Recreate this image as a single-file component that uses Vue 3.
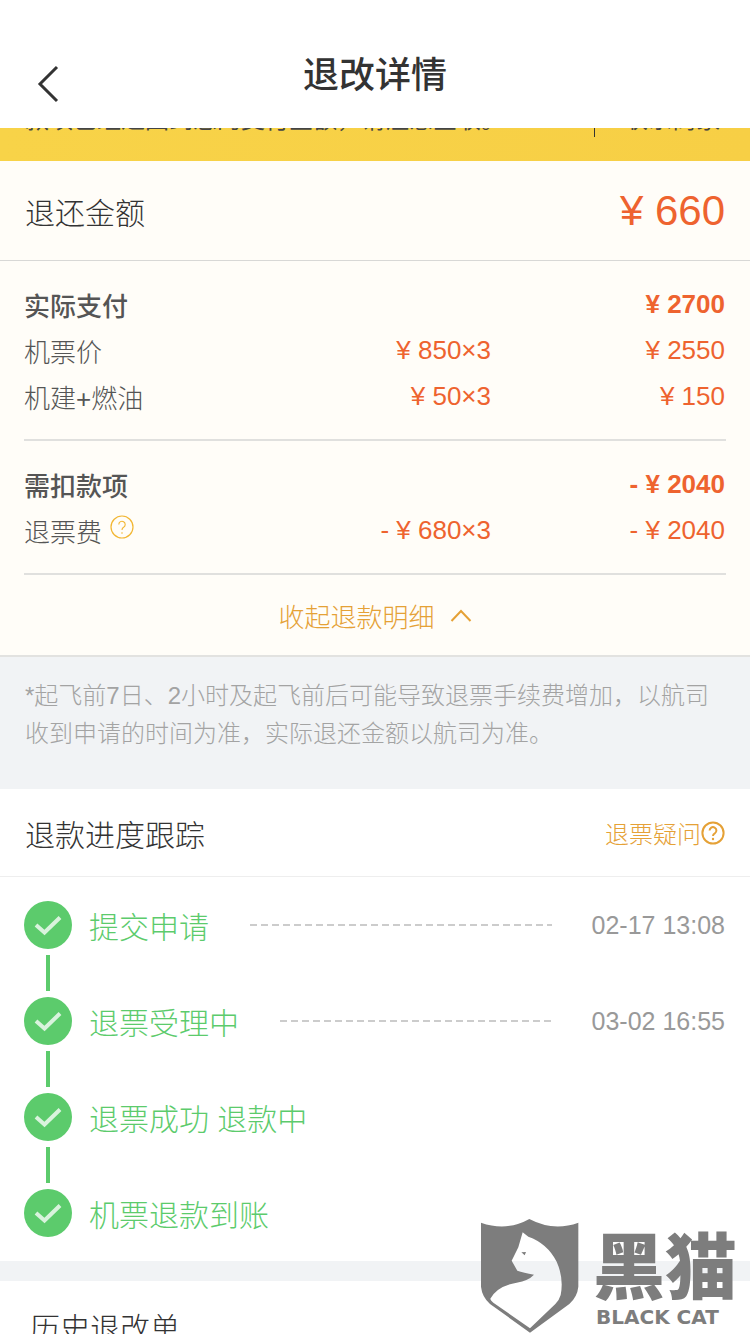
<script setup>
const paid = [
  { label: '机票价', unit: '¥ 850×3', total: '¥ 2550' },
  { label: '机建+燃油', unit: '¥ 50×3', total: '¥ 150' },
];

const steps = [
  { label: '提交申请', time: '02-17 13:08' },
  { label: '退票受理中', time: '03-02 16:55' },
  { label: '退票成功 退款中', time: '' },
  { label: '机票退款到账', time: '' },
];
</script>

<template>
  <div class="page">
    <header class="nav">
      <svg class="nav-back" width="24" height="38" viewBox="0 0 24 38" aria-hidden="true">
        <path d="M20 2 L3 19 L20 36" fill="none" stroke="#333" stroke-width="3" />
      </svg>
      <h1 class="nav-title">退改详情</h1>
    </header>

    <div class="notice">
      <span class="notice-text">款项已经退回到您的支付金额，请注意查收。</span>
      <span class="notice-link">联系商家</span>
    </div>

    <section class="refund">
      <span>退还金额</span>
      <span class="refund-amount">¥ 660</span>
    </section>

    <section class="detail">
      <div class="group">
        <div class="row row-head">
          <span>实际支付</span>
          <span class="row-total">¥ 2700</span>
        </div>
        <div v-for="item in paid" :key="item.label" class="row">
          <span>{{ item.label }}</span>
          <span class="row-unit">{{ item.unit }}</span>
          <span class="row-total">{{ item.total }}</span>
        </div>
      </div>
      <div class="group">
        <div class="row row-head">
          <span>需扣款项</span>
          <span class="row-total">- ¥ 2040</span>
        </div>
        <div class="row">
          <span class="fee-label">
            退票费
            <svg class="fee-help" width="24" height="24" viewBox="0 0 24 24" aria-hidden="true">
              <circle cx="12" cy="12" r="11" fill="none" stroke="#f2b632" stroke-width="1.2" />
              <path d="M8.8 9.4 A3.2 3.2 0 1 1 13.6 12.2 Q12 13 12 15" fill="none" stroke="#f2b632" stroke-width="1.1" />
              <circle cx="12" cy="18" r="0.8" fill="#f2b632" />
            </svg>
          </span>
          <span class="row-unit">- ¥ 680×3</span>
          <span class="row-total">- ¥ 2040</span>
        </div>
      </div>
      <div class="toggle">
        <span>收起退款明细</span>
        <svg width="22" height="14" viewBox="0 0 22 14" aria-hidden="true">
          <path d="M1.5 13 L11 3 L20.5 13" fill="none" stroke="#e5a136" stroke-width="2" />
        </svg>
      </div>
    </section>

    <p class="note">*起飞前7日、2小时及起飞前后可能导致退票手续费增加，以航司收到申请的时间为准，实际退还金额以航司为准。</p>

    <section class="track">
      <div class="track-head">
        <h2 class="track-title">退款进度跟踪</h2>
        <span class="track-help">
          退票疑问
          <svg width="24" height="24" viewBox="0 0 24 24" aria-hidden="true">
            <circle cx="12" cy="12" r="10.6" fill="none" stroke="#e5a136" stroke-width="2" />
            <path d="M8.6 9.6 A3.4 3.4 0 1 1 13.8 12.4 Q12 13.4 12 15" fill="none" stroke="#e5a136" stroke-width="2" />
            <circle cx="12" cy="18" r="1.2" fill="#e5a136" />
          </svg>
        </span>
      </div>
      <ol class="steps">
        <li v-for="step in steps" :key="step.label" class="step">
          <span class="step-dot">
            <svg width="48" height="48" viewBox="0 0 48 48" aria-hidden="true">
              <circle cx="24" cy="24" r="24" fill="#5ccb6c" />
              <path d="M12 24 L20.5 31.5 L36 16.5" fill="none" stroke="#d9f3dd" stroke-width="4" />
            </svg>
          </span>
          <span class="step-label">{{ step.label }}</span>
          <template v-if="step.time">
            <span class="step-dash"></span>
            <span class="step-time">{{ step.time }}</span>
          </template>
        </li>
      </ol>
    </section>

    <section class="history">历史退改单</section>

    <!-- watermark sits over the page content -->
    <div class="mark" aria-hidden="true">
      <svg class="mark-shield" width="290" height="134" viewBox="0 0 870 402">
        <path
          fill="#7d7d7d"
          fill-rule="evenodd"
          d="M63 68 Q140 95 208 57 Q280 95 355 68 L355 260 Q352 290 328 312 L210 398 L90 312 Q66 290 63 260 Z
             M188 97 L205 110 Q262 130 290 185 Q312 235 302 285 Q298 300 286 312 L210 385 L100 308 Q88 298 92 295 Q112 258 170 248 Q205 242 222 224 Q190 218 172 212 L155 182 L175 142 Z
             M184 157 L198 156 L194 166 Z"
        />
      </svg>
      <span class="mark-cn">黑猫</span>
      <span class="mark-en">BLACK CAT</span>
    </div>
  </div>
</template>

<style scoped>
.page {
  position: relative;
  width: 750px;
  height: 1334px;
  overflow: hidden;
  background: #fff;
  color: #333;
  font-family: "Liberation Sans", "Noto Sans CJK SC", sans-serif;
}

.nav {
  position: relative;
  display: flex;
  justify-content: center;
  align-items: center;
  height: 128px;
  padding-top: 40px;
  box-sizing: border-box;
}
.nav-back {
  position: absolute;
  left: 37px;
  top: 65px;
}
.nav-title {
  margin: 0;
  font-size: 36px;
  font-weight: 500;
  line-height: 50px;
  color: #333;
  position: relative;
  top: -8px;
}

.notice {
  display: flex;
  align-items: flex-end;
  height: 33px;
  padding: 0 30px 24px 25px;
  box-sizing: border-box;
  overflow: hidden;
  background: linear-gradient(90deg, #f8d348, #f7cf45);
  font-size: 24px;
  line-height: 34px;
  color: #444;
}
.notice-text {
  flex: 1;
  white-space: nowrap;
}
.notice-link {
  padding-left: 29px;
  border-left: 1px solid #333;
  white-space: nowrap;
}

.refund {
  display: flex;
  justify-content: space-between;
  align-items: center;
  height: 100px;
  padding: 0 25px;
  box-sizing: border-box;
  background: #fffdf8;
  border-bottom: 1px solid #d8d8d6;
  font-size: 30px;
  font-weight: 300;
}
.refund-amount {
  font-size: 42px;
  color: #ee632f;
}

.detail {
  padding: 0 24px;
  background: #fffdf8;
  border-bottom: 2px solid #e2e2e0;
}
.group {
  padding: 20px 0 20px;
  border-bottom: 2px solid #e0e0de;
}
.row {
  display: grid;
  grid-template-columns: 1fr 180px 234px;
  align-items: center;
  height: 46px;
  font-size: 26px;
  font-weight: 300;
  color: #555;
}
.row-head {
  grid-template-columns: 1fr auto;
  font-weight: 500;
}
.row-unit,
.row-total {
  text-align: right;
  color: #ee632f;
  padding-right: 1px;
}
.row-head .row-total {
  font-weight: 700;
}
.fee-label {
  display: flex;
  align-items: flex-start;
  gap: 8px;
  white-space: nowrap;
}
.fee-help {
  margin-top: 3px;
}
.toggle {
  display: flex;
  justify-content: center;
  align-items: center;
  gap: 15px;
  height: 80px;
  font-size: 26px;
  font-weight: 300;
  color: #e5a136;
}

.note {
  margin: 0;
  height: 132px;
  padding: 20px 25px 0;
  box-sizing: border-box;
  background: #f1f3f5;
  font-size: 24px;
  line-height: 38px;
  font-weight: 300;
  color: #a3a3a3;
}

.track-head {
  display: flex;
  justify-content: space-between;
  align-items: center;
  height: 88px;
  padding: 0 25px;
  box-sizing: border-box;
  border-bottom: 1px solid #eee;
}
.track-title {
  margin: 0;
  font-size: 30px;
  font-weight: 300;
  color: #333;
}
.track-help {
  display: flex;
  align-items: center;
  font-size: 24px;
  font-weight: 300;
  color: #e5a136;
}

.steps {
  margin: 0;
  padding: 24px 25px 24px 24px;
  list-style: none;
}
.step {
  position: relative;
  display: flex;
  align-items: center;
  height: 48px;
  font-size: 30px;
  font-weight: 300;
}
.step + .step {
  margin-top: 48px;
}
.step + .step::before {
  content: "";
  position: absolute;
  left: 22px;
  top: -42px;
  width: 4px;
  height: 36px;
  background: #5ccb6c;
}
.step-dot {
  display: flex;
  margin-right: 17px;
}
.step-label {
  color: #5ccb6c;
  white-space: nowrap;
}
.step-dash {
  flex: 1;
  height: 2px;
  margin: 0 40px 0 41px;
  background: repeating-linear-gradient(90deg, #ccc 0 7px, transparent 7px 11px);
}
.step-time {
  font-size: 25px;
  color: #999;
  white-space: nowrap;
}

.history {
  padding: 26px 30px 0;
  border-top: 20px solid #f1f3f5;
  font-size: 30px;
  font-weight: 300;
  line-height: 44px;
  color: #333;
}

.mark {
  position: absolute;
  left: 460px;
  top: 1200px;
  width: 290px;
  height: 134px;
}
.mark-shield {
  position: absolute;
  left: 0;
  top: 0;
}
.mark-cn {
  position: absolute;
  left: 133px;
  top: 22px;
  font-family: "Noto Sans CJK SC", sans-serif;
  font-size: 72px;
  font-weight: 900;
  line-height: 80px;
  color: #7d7d7d;
  white-space: nowrap;
}
.mark-en {
  position: absolute;
  left: 136px;
  top: 105px;
  font-family: "DejaVu Sans", sans-serif;
  font-size: 20px;
  font-weight: 700;
  line-height: 24px;
  color: #7d7d7d;
  white-space: nowrap;
}
</style>
